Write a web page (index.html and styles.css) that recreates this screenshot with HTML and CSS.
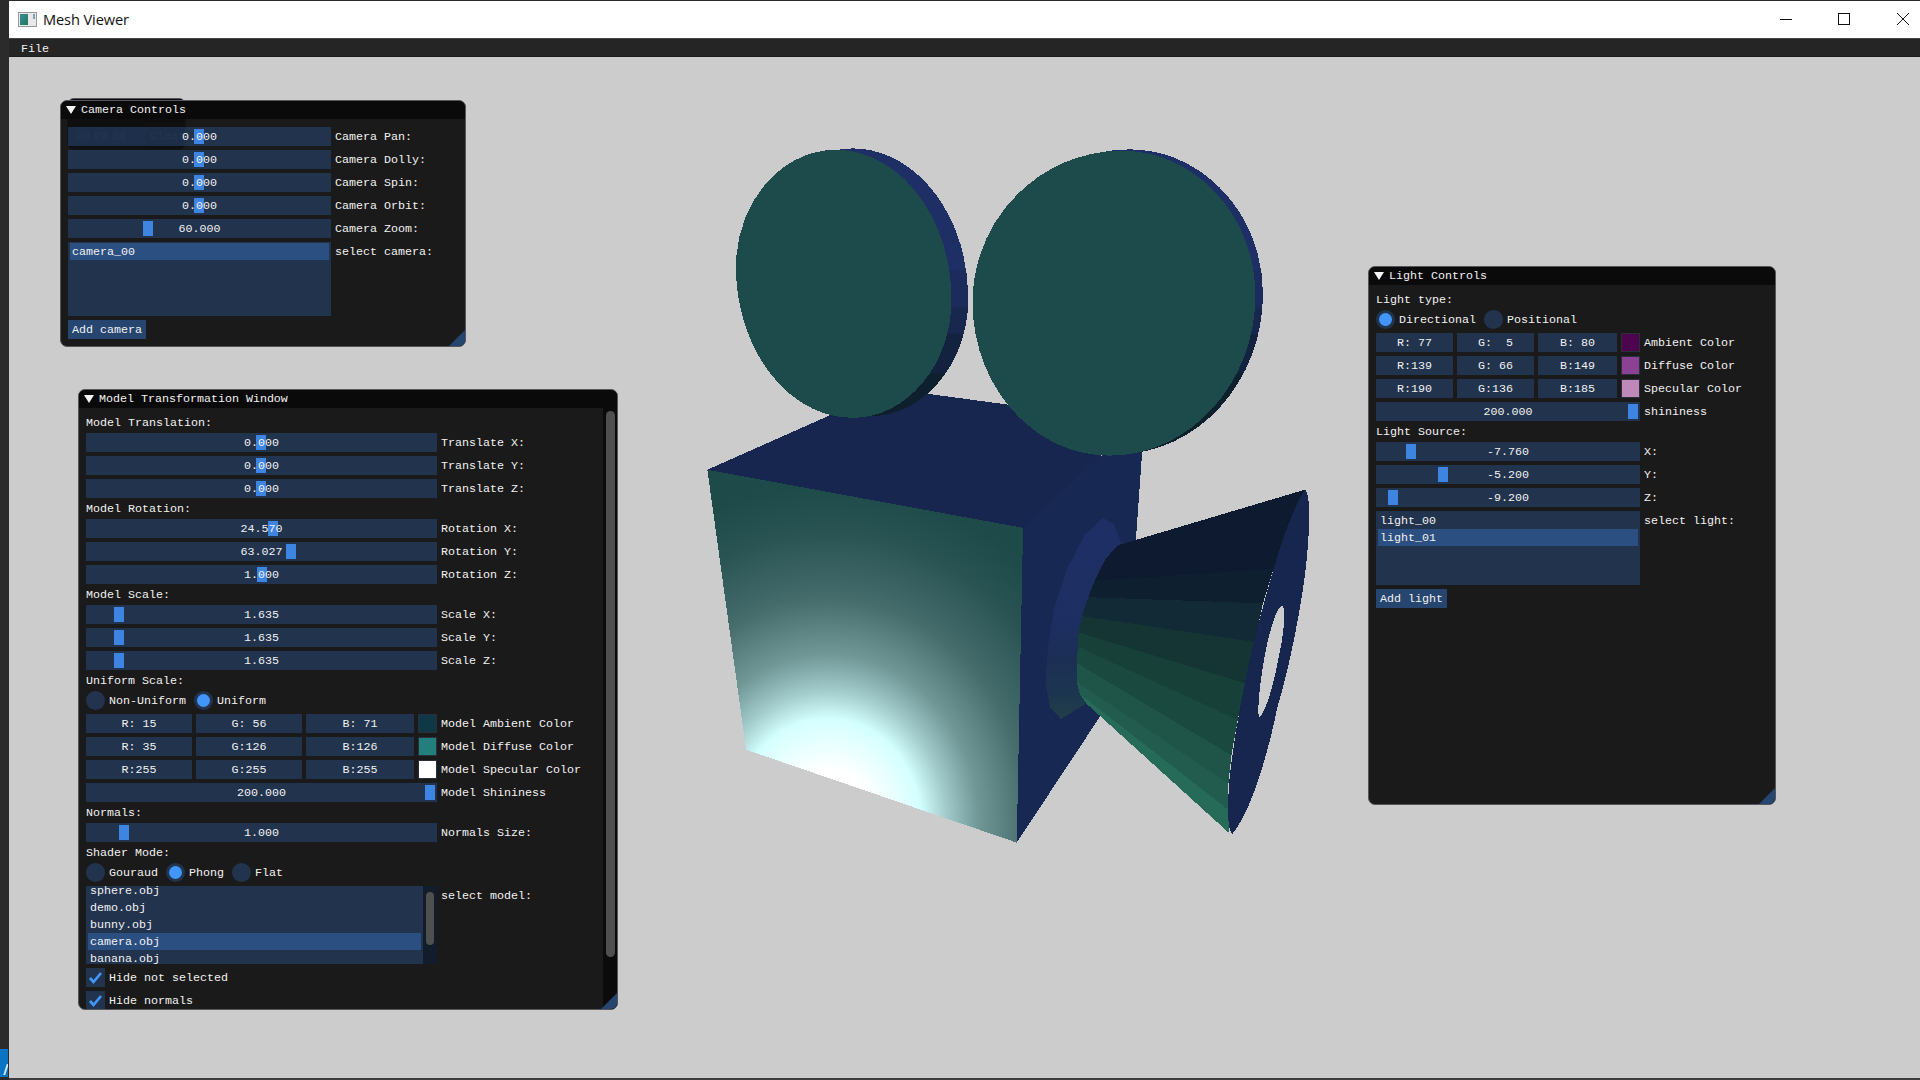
FILE: index.html
```html
<!DOCTYPE html>
<html lang="en">
<head>
<meta charset="utf-8">
<title>Mesh Viewer</title>
<link rel="stylesheet" href="styles.css">
</head>
<body>
<div class="screen">
  <aside class="edge"><div class="taskbar-tile"><span class="tile-mark"></span></div></aside>
  <div class="app">
    <header class="titlebar">
      <svg class="app-icon" viewBox="0 0 19 15" width="19" height="15">
        <defs><linearGradient id="ic" x1="0" y1="0" x2="1" y2="1"><stop offset="0" stop-color="#3d8a9a"/><stop offset="1" stop-color="#1f7a5a"/></linearGradient></defs>
        <rect x=".5" y=".5" width="18" height="14" fill="#e8e8e8" stroke="#9a9a9a"/>
        <rect x="2" y="2" width="8" height="11" fill="url(#ic)"/>
        <rect x="15" y="2" width="2" height="5" fill="#7fa0b0"/>
      </svg>
      <span class="app-name">Mesh Viewer</span>
      <div class="win-controls">
        <svg class="win-btn" viewBox="0 0 14 14" width="14" height="14"><path d="M0 7.5H12" stroke="#111" stroke-width="1"/></svg>
        <svg class="win-btn" viewBox="0 0 14 14" width="14" height="14"><rect x=".5" y="1.5" width="11" height="11" fill="none" stroke="#111" stroke-width="1"/></svg>
        <svg class="win-btn" viewBox="0 0 14 14" width="14" height="14"><path d="M1 1L13 13M13 1L1 13" stroke="#111" stroke-width="1"/></svg>
      </div>
    </header>
    <nav class="menubar"><span class="menu-item">File</span></nav>
    <main class="canvas">
      <svg class="mesh" viewBox="0 0 1568 1568" preserveAspectRatio="none">
        <defs>
          <radialGradient id="spec" gradientUnits="userSpaceOnUse" cx="350" cy="1470" r="720">
            <stop offset="0" stop-color="#ffffff"/>
            <stop offset=".16" stop-color="#ffffff"/>
            <stop offset=".21" stop-color="#f0ffff"/>
            <stop offset=".31" stop-color="#d4ffff"/>
            <stop offset=".39" stop-color="#a3cccc"/>
            <stop offset=".5" stop-color="#709696"/>
            <stop offset=".66" stop-color="#466c6c"/>
            <stop offset=".85" stop-color="#2a5454"/>
            <stop offset="1" stop-color="#1e4a4a"/>
          </radialGradient>
          <linearGradient id="bandA" gradientUnits="userSpaceOnUse" x1="0" y1="40" x2="0" y2="600">
            <stop offset="0" stop-color="#1e2f66"/><stop offset=".46" stop-color="#1e2f66"/>
            <stop offset=".47" stop-color="#1b2b5c"/><stop offset=".6" stop-color="#1b2b5c"/>
            <stop offset=".61" stop-color="#17274e"/><stop offset=".7" stop-color="#17274e"/>
            <stop offset=".71" stop-color="#13223e"/><stop offset=".85" stop-color="#13223e"/>
            <stop offset=".86" stop-color="#0e1f2e"/><stop offset="1" stop-color="#0e1f2e"/>
          </linearGradient>
          <linearGradient id="ring" gradientUnits="userSpaceOnUse" x1="0" y1="822" x2="0" y2="1250">
            <stop offset="0" stop-color="#1e2f66"/><stop offset=".5" stop-color="#1d2e62"/>
            <stop offset=".7" stop-color="#1b2f55"/><stop offset=".86" stop-color="#1c3550"/>
            <stop offset="1" stop-color="#213f48"/>
          </linearGradient>
        </defs>
        <g class="facets">
          <polygon fill="#16264f" points="65,720 360,603 580,558 780,582 1000,690 815,843"/>
          <polygon fill="#172853" points="815,843 1000,690 1098,682 1083,870 1000,1240 800,1510"/>
          <polygon fill="url(#spec)" points="65,720 815,843 800,1510 157,1313"/>
          <polygon fill="url(#ring)" points="1005,822 960,860 920,930 890,1010 875,1090 868,1170 880,1225 905,1248 960,1218 1040,1100 1060,900 1030,835"/>
          <path fill="url(#bandA)" transform="translate(40 -3)" d="M370,42 C240,42 133,154 133,290 C133,466 258,610 410,610 C539,610 645,497 645,360 C645,185 521,42 370,42Z"/>
          <path fill="#1d4a4a" d="M370,42 C240,42 133,154 133,290 C133,466 258,610 410,610 C539,610 645,497 645,360 C645,185 521,42 370,42Z"/>
          <path fill="url(#bandA)" transform="translate(18 -3)" d="M1050,44 C855,44 695,188 695,365 C695,544 841,690 1020,690 C1211,690 1367,537 1367,350 C1367,182 1224,44 1050,44Z"/>
          <path fill="#1d4a4a" d="M1050,44 C855,44 695,188 695,365 C695,544 841,690 1020,690 C1211,690 1367,537 1367,350 C1367,182 1224,44 1050,44Z"/>
          <polygon fill="#0d1a30" points="1040,880 1485,762 1410,930 985,955 1010,910"/>
          <polygon fill="#0e2030" points="985,955 1410,930 1385,1003 970,990"/>
          <polygon fill="#122a35" points="970,990 1385,1003 1365,1085 955,1030"/>
          <polygon fill="#153535" points="955,1030 1365,1085 1342,1172 947,1065"/>
          <polygon fill="#174038" points="947,1065 1342,1172 1325,1250 945,1095"/>
          <polygon fill="#1a4a3f" points="945,1095 1325,1250 1310,1325 943,1130"/>
          <polygon fill="#1f5548" points="943,1130 1310,1325 1303,1385 943,1170"/>
          <polygon fill="#225c4e" points="943,1170 1303,1385 1302,1440 950,1195"/>
          <polygon fill="#266a58" points="950,1195 1302,1440 1305,1490 965,1215"/>
          <path fill="#16264f" d="M1485,762 C1497,770 1497,830 1490,900 C1480,1000 1445,1150 1420,1220 C1400,1310 1360,1440 1312,1492 C1298,1480 1302,1420 1305,1380 C1315,1290 1340,1170 1365,1080 C1390,990 1440,820 1485,762Z"/>
          <path fill="#cccccc" d="M1430,1007 C1440,1010 1436,1060 1425,1105 C1412,1170 1392,1235 1376,1245 C1370,1230 1378,1170 1390,1110 C1400,1060 1418,1012 1430,1007Z"/>
        </g>
      </svg>

      <section class="panel ghost">
        <div class="panel-title"></div>
        <div class="ghost-row">
          <span class="ghost-field">20</span><span class="ghost-field">20</span><span class="ghost-field">20</span>
          <span class="ghost-swatch"></span><span class="ghost-text">Clear</span>
        </div>
      </section>

      <section class="panel camera-panel">
        <div class="panel-title"><span class="caret"></span><span>Camera Controls</span></div>
        <div class="panel-body">
          <div class="row"><div class="slider"><span class="thumb" style="left:126px"></span><span class="value">0.000</span></div><span class="label">Camera Pan:</span></div>
          <div class="row"><div class="slider"><span class="thumb" style="left:126px"></span><span class="value">0.000</span></div><span class="label">Camera Dolly:</span></div>
          <div class="row"><div class="slider"><span class="thumb" style="left:126px"></span><span class="value">0.000</span></div><span class="label">Camera Spin:</span></div>
          <div class="row"><div class="slider"><span class="thumb" style="left:126px"></span><span class="value">0.000</span></div><span class="label">Camera Orbit:</span></div>
          <div class="row"><div class="slider"><span class="thumb" style="left:75px"></span><span class="value">60.000</span></div><span class="label">Camera Zoom:</span></div>
          <div class="row list-row">
            <div class="listbox"><div class="list-items"><div class="list-item selected">camera_00</div></div></div>
            <span class="label list-label">select camera:</span>
          </div>
          <button class="btn">Add camera</button>
        </div>
        <span class="grip"></span>
      </section>

      <section class="panel model-panel">
        <div class="panel-title"><span class="caret"></span><span>Model Transformation Window</span></div>
        <div class="scroll-wrap">
          <div class="panel-body">
            <div class="text">Model Translation:</div>
            <div class="row"><div class="slider"><span class="thumb" style="left:170px"></span><span class="value">0.000</span></div><span class="label">Translate X:</span></div>
            <div class="row"><div class="slider"><span class="thumb" style="left:170px"></span><span class="value">0.000</span></div><span class="label">Translate Y:</span></div>
            <div class="row"><div class="slider"><span class="thumb" style="left:170px"></span><span class="value">0.000</span></div><span class="label">Translate Z:</span></div>
            <div class="text">Model Rotation:</div>
            <div class="row"><div class="slider"><span class="thumb" style="left:182px"></span><span class="value">24.570</span></div><span class="label">Rotation X:</span></div>
            <div class="row"><div class="slider"><span class="thumb" style="left:200px"></span><span class="value">63.027</span></div><span class="label">Rotation Y:</span></div>
            <div class="row"><div class="slider"><span class="thumb" style="left:171px"></span><span class="value">1.000</span></div><span class="label">Rotation Z:</span></div>
            <div class="text">Model Scale:</div>
            <div class="row"><div class="slider"><span class="thumb" style="left:28px"></span><span class="value">1.635</span></div><span class="label">Scale X:</span></div>
            <div class="row"><div class="slider"><span class="thumb" style="left:28px"></span><span class="value">1.635</span></div><span class="label">Scale Y:</span></div>
            <div class="row"><div class="slider"><span class="thumb" style="left:28px"></span><span class="value">1.635</span></div><span class="label">Scale Z:</span></div>
            <div class="text">Uniform Scale:</div>
            <div class="options">
              <span class="option"><span class="radio"></span><span class="option-text">Non-Uniform</span></span>
              <span class="option"><span class="radio on"></span><span class="option-text">Uniform</span></span>
            </div>
            <div class="row">
              <div class="color-fields"><span class="field">R: 15</span><span class="field">G: 56</span><span class="field">B: 71</span><span class="swatch" style="background:rgb(15,56,71)"></span></div>
              <span class="label">Model Ambient Color</span>
            </div>
            <div class="row">
              <div class="color-fields"><span class="field">R: 35</span><span class="field">G:126</span><span class="field">B:126</span><span class="swatch" style="background:rgb(35,126,126)"></span></div>
              <span class="label">Model Diffuse Color</span>
            </div>
            <div class="row">
              <div class="color-fields"><span class="field">R:255</span><span class="field">G:255</span><span class="field">B:255</span><span class="swatch" style="background:rgb(255,255,255)"></span></div>
              <span class="label">Model Specular Color</span>
            </div>
            <div class="row"><div class="slider"><span class="thumb" style="left:339px"></span><span class="value">200.000</span></div><span class="label">Model Shininess</span></div>
            <div class="text">Normals:</div>
            <div class="row"><div class="slider"><span class="thumb" style="left:33px"></span><span class="value">1.000</span></div><span class="label">Normals Size:</span></div>
            <div class="text">Shader Mode:</div>
            <div class="options">
              <span class="option"><span class="radio"></span><span class="option-text">Gouraud</span></span>
              <span class="option"><span class="radio on"></span><span class="option-text">Phong</span></span>
              <span class="option"><span class="radio"></span><span class="option-text">Flat</span></span>
            </div>
            <div class="row list-row">
              <div class="listbox short">
                <div class="list-items scrolled">
                  <div class="list-item">sphere.obj</div>
                  <div class="list-item">demo.obj</div>
                  <div class="list-item">bunny.obj</div>
                  <div class="list-item selected">camera.obj</div>
                  <div class="list-item">banana.obj</div>
                </div>
                <div class="list-scroll"><span class="list-scroll-thumb"></span></div>
              </div>
              <span class="label list-label">select model:</span>
            </div>
            <div class="options"><span class="option"><span class="check"><svg viewBox="0 0 19 19" width="19" height="19"><path d="M4 10L7.5 14L15 5" fill="none" stroke="#4296fa" stroke-width="2.7"/></svg></span><span class="option-text">Hide not selected</span></span></div>
            <div class="options"><span class="option"><span class="check"><svg viewBox="0 0 19 19" width="19" height="19"><path d="M4 10L7.5 14L15 5" fill="none" stroke="#4296fa" stroke-width="2.7"/></svg></span><span class="option-text">Hide normals</span></span></div>
          </div>
          <div class="scroll-track"><span class="scroll-thumb"></span></div>
        </div>
        <span class="grip"></span>
      </section>

      <section class="panel light-panel">
        <div class="panel-title"><span class="caret"></span><span>Light Controls</span></div>
        <div class="panel-body">
          <div class="text">Light type:</div>
          <div class="options">
            <span class="option"><span class="radio on"></span><span class="option-text">Directional</span></span>
            <span class="option"><span class="radio"></span><span class="option-text">Positional</span></span>
          </div>
          <div class="row">
            <div class="color-fields"><span class="field">R: 77</span><span class="field">G:  5</span><span class="field">B: 80</span><span class="swatch" style="background:rgb(77,5,80)"></span></div>
            <span class="label">Ambient Color</span>
          </div>
          <div class="row">
            <div class="color-fields"><span class="field">R:139</span><span class="field">G: 66</span><span class="field">B:149</span><span class="swatch" style="background:rgb(139,66,149)"></span></div>
            <span class="label">Diffuse Color</span>
          </div>
          <div class="row">
            <div class="color-fields"><span class="field">R:190</span><span class="field">G:136</span><span class="field">B:185</span><span class="swatch" style="background:rgb(190,136,185)"></span></div>
            <span class="label">Specular Color</span>
          </div>
          <div class="row"><div class="slider"><span class="thumb" style="left:252px"></span><span class="value">200.000</span></div><span class="label">shininess</span></div>
          <div class="text">Light Source:</div>
          <div class="row"><div class="slider"><span class="thumb" style="left:30px"></span><span class="value">-7.760</span></div><span class="label">X:</span></div>
          <div class="row"><div class="slider"><span class="thumb" style="left:62px"></span><span class="value">-5.200</span></div><span class="label">Y:</span></div>
          <div class="row"><div class="slider"><span class="thumb" style="left:12px"></span><span class="value">-9.200</span></div><span class="label">Z:</span></div>
          <div class="row list-row">
            <div class="listbox"><div class="list-items"><div class="list-item">light_00</div><div class="list-item selected">light_01</div></div></div>
            <span class="label list-label">select light:</span>
          </div>
          <button class="btn">Add light</button>
        </div>
        <span class="grip"></span>
      </section>
    </main>
    <div class="bottom-line"></div>
  </div>
</div>
</body>
</html>
```

FILE: styles.css
```css
* { box-sizing: border-box; }
html, body { margin: 0; height: 100%; overflow: hidden; }
body { background: #2b2b2b; }

.screen { display: flex; width: 1920px; height: 1080px; }

.edge {
  width: 9px; flex: none; background: #2b2b2b;
  display: flex; flex-direction: column; justify-content: flex-end;
  padding-bottom: 3px;
}
.taskbar-tile { width: 8px; height: 28px; background: #0a74c4; position: relative; overflow: hidden; }
.tile-mark { position: absolute; left: 5px; top: 15px; width: 2px; height: 11px; background: #cfe6f5; transform: skewX(-18deg); }

.app { flex: 1; display: flex; flex-direction: column; min-width: 0; padding-top: 1px; }

.titlebar {
  height: 37px; flex: none; background: #fff;
  display: flex; align-items: center; padding-left: 9px;
}
.app-icon { flex: none; margin-top: -1px; }
.app-name { margin: -2px 0 0 6px; font: 14.6px/20px "Open Sans", "Noto Sans", sans-serif; color: #111; letter-spacing: -.1px; }
.win-controls { margin-left: auto; display: flex; gap: 44px; padding-right: 10px; margin-top: -1px; }
.win-btn { display: block; }

.menubar {
  height: 19px; flex: none; background: #252525;
  border-top: 1px solid #444; border-bottom: 1px solid #1c1c1c;
  padding-left: 12px;
  font: 11.67px/21px "Liberation Mono", monospace; color: #f0f0f0;
}

.canvas { flex: 1; position: relative; background: #ccc; overflow: hidden; min-height: 0; }
.bottom-line { height: 2px; flex: none; background: #3d3d3d; }

.mesh { position: absolute; left: 671px; top: 73px; width: 660px; height: 740px; }
.facets polygon, .facets path { shape-rendering: crispEdges; }

/* ImGui-style windows */
.panel {
  position: absolute;
  background: rgba(15, 15, 15, .94);
  border: 1px solid #55555c;
  border-radius: 7px;
  overflow: hidden;
  font: 11.67px/13px "Liberation Mono", monospace;
  color: #f2f2f2;
  --w: 264px;
}
.camera-panel { left: 51px; top: 43px; width: 406px; height: 247px; --w: 263px; }
.model-panel { left: 69px; top: 332px; width: 540px; height: 621px; --w: 351px; }
.light-panel { left: 1359px; top: 209px; width: 408px; height: 539px; --w: 264px; }

.panel-title {
  height: 18px; background: #0a0a0a;
  display: flex; align-items: center; padding-left: 5px;
  line-height: 15px;
}
.caret {
  width: 0; height: 0; margin-right: 5px;
  border-left: 5px solid transparent; border-right: 5px solid transparent;
  border-top: 8px solid #f4f4f4;
  margin-top: -1px;
}
.panel-body { display: flex; flex-direction: column; align-items: flex-start; gap: 4px; padding: 8px 7px 0; flex: 1; min-width: 0; }

.text { height: 13px; line-height: 15px; white-space: nowrap; }
.row { display: flex; gap: 4px; height: 19px; white-space: nowrap; }
.label { line-height: 21px; }
.list-row { height: auto; }

.slider {
  position: relative; width: var(--w); height: 19px; flex: none;
  background: rgba(41, 74, 122, .54);
  display: flex; align-items: center; justify-content: center;
}
.thumb { position: absolute; top: 2px; width: 10px; height: 15px; background: #3d85e0; }
.value { position: relative; padding-top: 2px; }

.color-fields { display: flex; gap: 4px; width: var(--w); height: 19px; flex: none; }
.field {
  flex: none; width: calc((var(--w) - 33px) / 3);
  background: rgba(41, 74, 122, .54); line-height: 21px; height: 19px; text-align: center; white-space: pre;
}
.field:nth-child(3) { width: calc((var(--w) - 33px) / 3 + 2px); }
.swatch { width: 19px; height: 19px; flex: none; border: 1px solid #2a2f3a; }

.options { display: flex; gap: 8px; height: 19px; white-space: nowrap; flex: none; }
.option { display: flex; align-items: center; gap: 4px; }
.option-text { padding-top: 2px; }
.radio {
  width: 19px; height: 19px; border-radius: 50%;
  background: rgba(41, 74, 122, .54); position: relative; flex: none;
}
.radio.on::after {
  content: ""; position: absolute; left: 3px; top: 3px; width: 13px; height: 13px;
  border-radius: 50%; background: #4296fa;
}
.check { width: 19px; height: 19px; background: rgba(41, 74, 122, .54); flex: none; display: block; }
.check svg { display: block; }

.listbox {
  width: var(--w); height: 74px; flex: none; display: flex;
  background: rgba(41, 74, 122, .54); overflow: hidden;
}
.listbox.short { height: 78px; }
.list-items { flex: 1; padding: 1px 2px 0; min-width: 0; }
.list-items.scrolled { margin-top: -4px; padding-top: 0; }
.list-item { height: 17px; line-height: 19px; padding-left: 2px; }
.list-item.selected { background: #2b4f80; }
.list-scroll { width: 14px; flex: none; background: #131c2a; padding: 6px 3px 0; }
.list-scroll-thumb { display: block; width: 8px; height: 53px; border-radius: 4px; background: #4f4f4f; }

.btn {
  font: inherit; color: inherit; border: 0; margin: 0;
  height: 19px; padding: 2px 4px 0; background: #26456f;
  line-height: 17px; white-space: nowrap; text-align: left;
}

.grip {
  position: absolute; right: 0; bottom: 0; width: 0; height: 0;
  border-left: 16px solid transparent; border-bottom: 16px solid #26456f;
}

.scroll-wrap { display: flex; height: 601px; overflow: hidden; }
.scroll-wrap .panel-body { overflow: hidden; }
.scroll-track { width: 14px; flex: none; background: #0b0b0b; padding: 3px 2px 0 3px; }
.scroll-thumb { display: block; width: 9px; height: 546px; border-radius: 5px; background: #4f4f4f; }

/* window lying behind the camera controls */
.ghost { left: 58px; top: 41px; width: 119px; height: 52px; }
.ghost-row { display: flex; gap: 3.5px; padding: 9px 0 0 8px; white-space: nowrap; }
.ghost-field { width: 16px; height: 19px; line-height: 21px; text-align: center; background: rgba(41, 74, 122, .54); }
.ghost-swatch { width: 17px; height: 19px; background: #2f3f55; }
.ghost-text { line-height: 21px; margin-left: 2px; }
```
